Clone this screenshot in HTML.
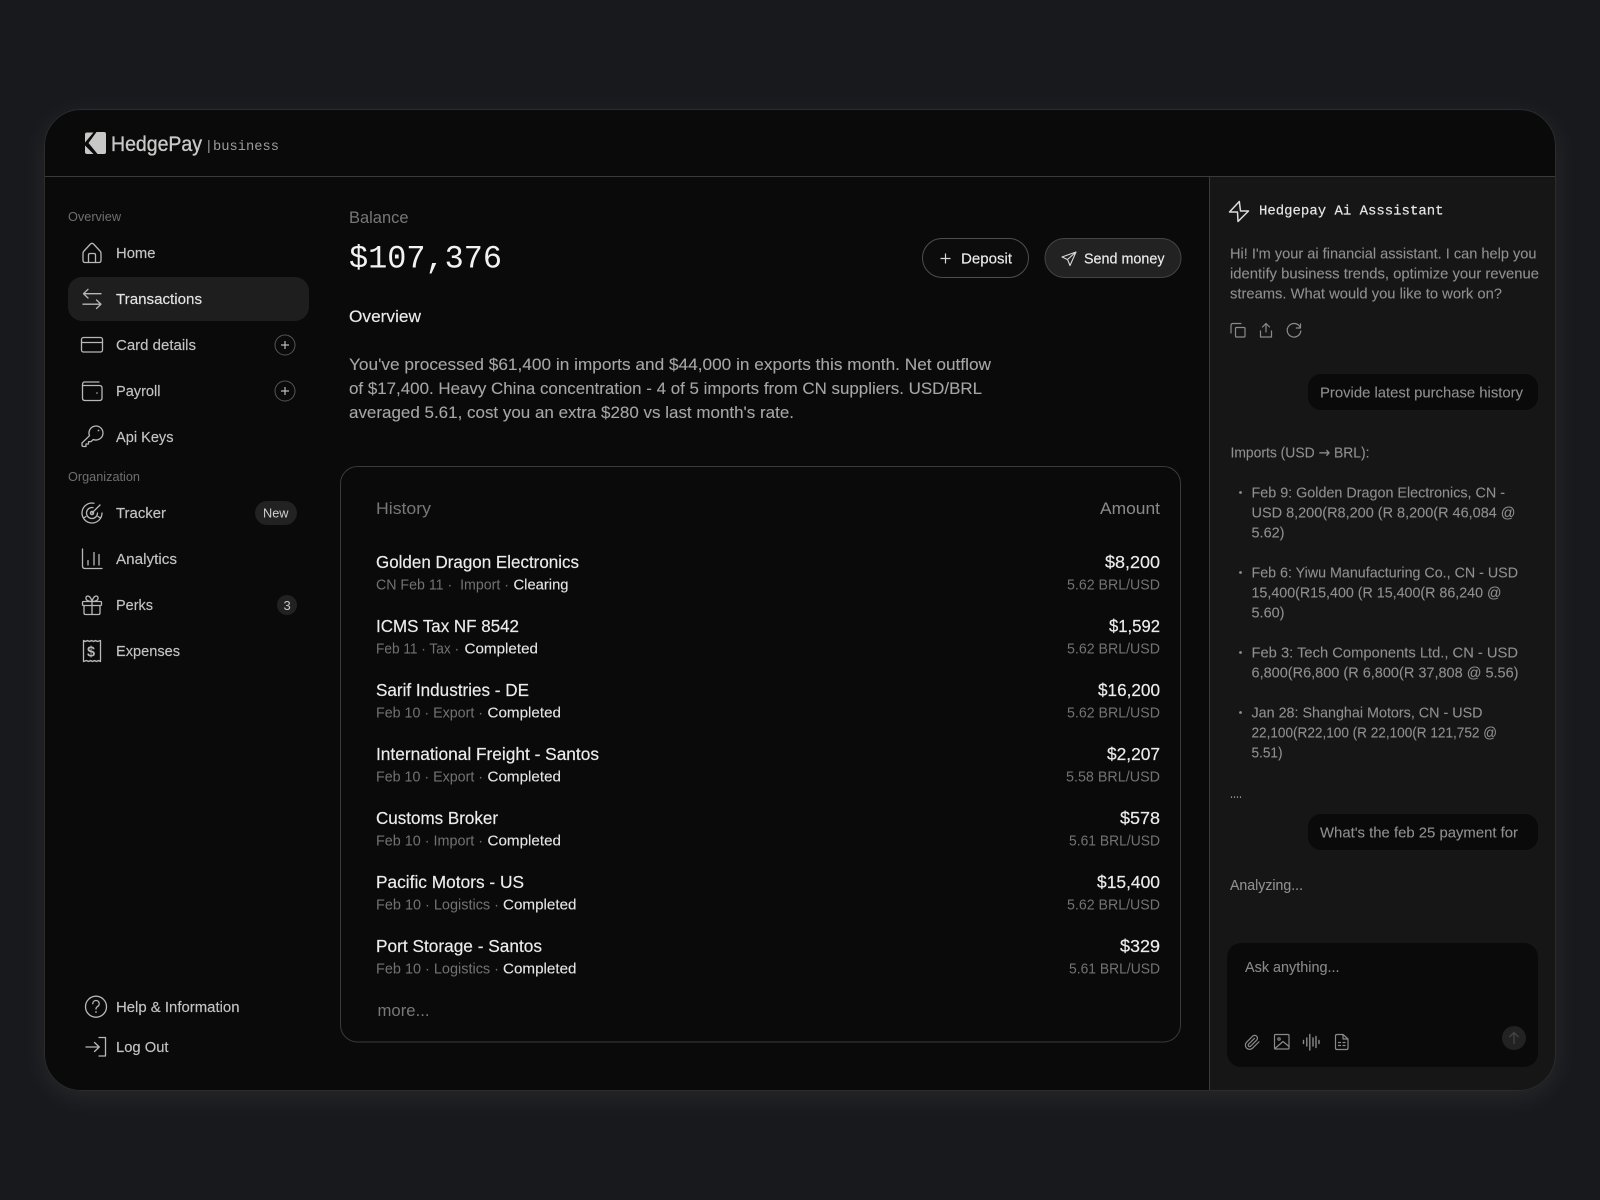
<!DOCTYPE html>
<html><head><meta charset="utf-8"><title>HedgePay</title>
<style>
html,body{margin:0;padding:0;width:1600px;height:1200px;background:#17191c;overflow:hidden}
#glow{position:absolute;left:44px;top:109px;width:1512px;height:982px;border-radius:37px;box-shadow:0 6px 28px rgba(255,255,255,.07)}
svg{position:absolute;left:0;top:0}
text{font-family:"Liberation Sans",sans-serif;white-space:pre}
.m{font-family:"Liberation Mono",monospace}
.nav{font-size:15px;fill:#c4c4c4;stroke:#c4c4c4;stroke-width:.15}
.lab{font-size:12.5px;fill:#6f6f6f}
.nm{font-size:17.5px;fill:#ececec;stroke:#ececec;stroke-width:.18}
.sb{font-size:15px;fill:#727272}
.st{font-size:15px;fill:#e6e6e6;stroke:#e6e6e6;stroke-width:.12}
.amt{font-size:17.5px;fill:#ececec;text-anchor:end;stroke:#ececec;stroke-width:.18}
.rt{font-size:15px;fill:#727272;text-anchor:end}
.ch{font-size:15px;fill:#8f8f8f;stroke:#8f8f8f;stroke-width:.1}
.i{fill:none;stroke:#b8b8b8;stroke-width:1.3;stroke-linecap:round;stroke-linejoin:round}
.j{fill:none;stroke:#8a8a8a;stroke-width:1.2;stroke-linecap:round;stroke-linejoin:round}
</style></head><body>
<div id="glow"></div>
<svg width="1600" height="1200" viewBox="0 0 1600 1200" xmlns="http://www.w3.org/2000/svg">
<rect x="44" y="109" width="1512" height="982" rx="37" fill="#0a0a0a"/>
<path d="M1209.500 176H1555.500V1054A36.500 36.500 0 0 1 1519 1090.500H1209.500Z" fill="#161616"/>
<path d="M44 176.500H1556" stroke="#3a3a38" stroke-width="1"/>
<path d="M1209.500 176V1090" stroke="#3a3a3a" stroke-width="1"/>
<rect x="44.500" y="109.500" width="1511" height="981" rx="36.500" fill="none" stroke="#2c2c2c"/>

<!-- logo -->
<path d="M85 134.500Q85 132.500 87 132.500H93.500L85 142.500Z" fill="#c8c8c6"/>
<path d="M85 145.500L93.500 154H87Q85 154 85 152Z" fill="#c8c8c6"/>
<path d="M96.500 132H104Q106 132 106 134V152Q106 154 104 154H97.500L88.500 143Z" fill="#c8c8c6"/>
<text x="111" y="151" font-size="21" fill="#c9c9c7" stroke="#c9c9c7" stroke-width=".35" textLength="91" lengthAdjust="spacingAndGlyphs">HedgePay</text>
<text x="207" y="150" font-size="14" fill="#9a9a9a">|</text>
<text class="m" x="213" y="150" font-size="13.750" fill="#9c9c9c" textLength="66" lengthAdjust="spacingAndGlyphs">business</text>

<!-- sidebar -->
<text class="lab" x="68" y="221" textLength="53" lengthAdjust="spacingAndGlyphs">Overview</text>
<path class="i" d="M83 253.500Q83 252 84 251L90.500 244Q92 242.600 93.500 244L100 251Q101 252 101 253.500V260Q101 262.500 99 262.500H85Q83 262.500 83 260ZM88.500 262.500V255Q88.500 253.500 90 253.500H94Q95.500 253.500 95.500 255V262.500"/>
<text class="nav" x="116" y="258" textLength="39.500" lengthAdjust="spacingAndGlyphs">Home</text>
<rect x="68" y="277" width="241" height="44" rx="14" fill="#1e1e1e"/>
<path class="i" d="M101 293.700H83.500M83.500 293.700L88 289.300M83.500 293.700L88 298M83 304.200H101M101 304.200L96.500 300M101 304.200L96.500 308.500"/>
<text class="nav" x="116" y="304" textLength="86" lengthAdjust="spacingAndGlyphs" style="fill:#e4e4e4;stroke:#e4e4e4">Transactions</text>
<rect class="i" x="81.500" y="337.500" width="21" height="14.500" rx="2"/><path class="i" d="M81.500 342.500H102.500"/>
<text class="nav" x="116" y="350" textLength="80" lengthAdjust="spacingAndGlyphs">Card details</text>
<circle cx="285" cy="345" r="10" fill="none" stroke="#555"/><path d="M281 345H289M285 341V349" stroke="#bbb" stroke-width="1.200"/>
<path class="i" d="M84 382H99M84 382Q82.500 382.500 82.500 385V398Q82.500 400.500 85 400.500H99.500Q102 400.500 102 398V388Q102 385.500 99.500 385.500H83"/><circle cx="97" cy="393" r=".8" fill="#b8b8b8"/>
<text class="nav" x="116" y="396" textLength="44.500" lengthAdjust="spacingAndGlyphs">Payroll</text>
<circle cx="285" cy="391" r="10" fill="none" stroke="#555"/><path d="M281 391H289M285 387V395" stroke="#bbb" stroke-width="1.200"/>
<path class="i" d="M89.500 435.700A7 7 0 1 1 93.300 439.500L91 441.600H88.500V444H86V446.500H83.500Q82 446.500 82 445V443Z"/><circle cx="98.500" cy="430.500" r=".9" fill="#b8b8b8"/>
<text class="nav" x="116" y="442" textLength="57.500" lengthAdjust="spacingAndGlyphs">Api Keys</text>
<text class="lab" x="68" y="481" textLength="72" lengthAdjust="spacingAndGlyphs">Organization</text>
<path class="i" d="M94 503.200A10 10 0 1 0 102 513M93 507.600A5.500 5.500 0 1 0 97.500 513M92 513L100 505M83.500 518L86 516.500M100.500 518L98 516.500"/><circle cx="92" cy="513" r="1.600" class="i"/>
<text class="nav" x="116" y="518" textLength="50" lengthAdjust="spacingAndGlyphs">Tracker</text>
<rect x="255" y="501" width="42" height="24" rx="12" fill="#222"/><text x="263" y="517.500" font-size="13" fill="#d0d0d0" textLength="25.500" lengthAdjust="spacingAndGlyphs">New</text>
<path class="i" d="M82.500 549V566Q82.500 568.500 85 568.500H102M88 560.500V565M94 552.500V565M99 554.500V565"/>
<text class="nav" x="116" y="564" textLength="61" lengthAdjust="spacingAndGlyphs">Analytics</text>
<path class="i" d="M83.500 601.500H100.500Q101.500 601.500 101.500 602.500V604.500Q101.500 605.500 100.500 605.500H83.500Q82.500 605.500 82.500 604.500V602.500Q82.500 601.500 83.500 601.500ZM84 605.500V613Q84 614.500 85.500 614.500H98.500Q100 614.500 100 613V605.500M92 601.500V614.500M92 601.500C88 601.500 85.500 600 86 597.500C86.800 594.800 90.500 595.500 92 601.500ZM92 601.500C96 601.500 98.500 600 98 597.500C97.200 594.800 93.500 595.500 92 601.500Z"/>
<text class="nav" x="116" y="610" textLength="37" lengthAdjust="spacingAndGlyphs">Perks</text>
<circle cx="287" cy="605" r="10" fill="#222"/><text x="283.500" y="610" font-size="13" fill="#c8c8c8">3</text>
<path class="i" d="M83.500 640.500L85.500 641.500 87.500 640.500 89.500 641.500 91.500 640.500 93.500 641.500 95.500 640.500 97.500 641.500 100.500 640.500V661.500L98.500 660.500 96.500 661.500 94.500 660.500 92.500 661.500 90.500 660.500 88.500 661.500 86.500 660.500 83.500 661.500Z"/>
<text x="87" y="656.500" font-size="14.500" font-weight="bold" fill="#b8b8b8">$</text>
<text class="nav" x="116" y="656" textLength="64" lengthAdjust="spacingAndGlyphs">Expenses</text>
<circle class="i" cx="96" cy="1006.700" r="10.500"/><path class="i" d="M92.800 1003.700A3.200 3.200 0 1 1 97.500 1006.500C96.500 1007.200 96 1007.800 96 1009"/><circle cx="96" cy="1012" r=".9" fill="#b8b8b8"/>
<text class="nav" x="116" y="1012" textLength="123.500" lengthAdjust="spacingAndGlyphs">Help &amp; Information</text>
<path class="i" d="M86 1047H99.300M99.300 1047L94.500 1042.500M99.300 1047L94.500 1051.500M99 1037.500H105.500V1056H99"/>
<text class="nav" x="116" y="1052" textLength="52.500" lengthAdjust="spacingAndGlyphs">Log Out</text>

<!-- main head -->
<text x="349" y="223" font-size="16.500" fill="#777" textLength="59.500" lengthAdjust="spacingAndGlyphs">Balance</text>
<text class="m" x="349" y="267.500" font-size="32" fill="#f2f2f2" textLength="153" lengthAdjust="spacingAndGlyphs">$107,376</text>
<text x="349" y="322" font-size="17" fill="#ececec" stroke="#ececec" stroke-width=".15" textLength="72" lengthAdjust="spacingAndGlyphs">Overview</text>
<text x="349" y="370" font-size="17" fill="#a6a6a6" stroke="#a6a6a6" stroke-width=".1" textLength="642" lengthAdjust="spacingAndGlyphs">You've processed $61,400 in imports and $44,000 in exports this month. Net outflow</text>
<text x="349" y="394" font-size="17" fill="#a6a6a6" stroke="#a6a6a6" stroke-width=".1" textLength="633" lengthAdjust="spacingAndGlyphs">of $17,400. Heavy China concentration - 4 of 5 imports from CN suppliers. USD/BRL</text>
<text x="349" y="418" font-size="17" fill="#a6a6a6" stroke="#a6a6a6" stroke-width=".1" textLength="445" lengthAdjust="spacingAndGlyphs">averaged 5.61, cost you an extra $280 vs last month's rate.</text>

<rect x="922.500" y="238.500" width="106" height="39" rx="19.500" fill="#0c0c0c" stroke="#4e4e4e"/>
<path d="M940.500 258.500H950.500M945.500 253.500V263.500" stroke="#d8d8d8" stroke-width="1.200"/>
<text x="961" y="263.500" font-size="15" fill="#ececec" stroke="#ececec" stroke-width=".15" textLength="51" lengthAdjust="spacingAndGlyphs">Deposit</text>
<rect x="1045" y="238.500" width="136" height="39" rx="19.500" fill="#222" stroke="#444"/>
<path d="M1076 252L1062 257 1067.500 259.500 1070 265.500ZM1076 252L1067.500 259.500" fill="none" stroke="#d8d8d8" stroke-width="1.100" stroke-linejoin="round"/>
<text x="1084" y="263.500" font-size="15" fill="#ececec" stroke="#ececec" stroke-width=".15" textLength="80.500" lengthAdjust="spacingAndGlyphs">Send money</text>

<!-- history -->
<rect x="340.500" y="466.500" width="840" height="575.500" rx="17" fill="#0a0a0a" stroke="#3a3a3a"/>
<text x="376" y="514" font-size="17" fill="#777" textLength="55" lengthAdjust="spacingAndGlyphs">History</text>
<text x="1160" y="514" font-size="17" fill="#8a8a8a" text-anchor="end" textLength="60" lengthAdjust="spacingAndGlyphs">Amount</text>

<text class="nm" x="376" y="568" textLength="203" lengthAdjust="spacingAndGlyphs">Golden Dragon Electronics</text>
<text class="sb" x="376" y="589.500" textLength="133" lengthAdjust="spacingAndGlyphs">CN Feb 11 ·  Import ·</text>
<text class="st" x="513.500" y="589.500" textLength="55" lengthAdjust="spacingAndGlyphs">Clearing</text>
<text class="amt" x="1160" y="568" textLength="55" lengthAdjust="spacingAndGlyphs">$8,200</text>
<text class="rt" x="1160" y="589.500" textLength="93" lengthAdjust="spacingAndGlyphs">5.62 BRL/USD</text>

<text class="nm" x="376" y="632" textLength="143" lengthAdjust="spacingAndGlyphs">ICMS Tax NF 8542</text>
<text class="sb" x="376" y="653.500" textLength="83" lengthAdjust="spacingAndGlyphs">Feb 11 · Tax ·</text>
<text class="st" x="464.500" y="653.500" textLength="73.500" lengthAdjust="spacingAndGlyphs">Completed</text>
<text class="amt" x="1160" y="632" textLength="51" lengthAdjust="spacingAndGlyphs">$1,592</text>
<text class="rt" x="1160" y="653.500" textLength="93" lengthAdjust="spacingAndGlyphs">5.62 BRL/USD</text>

<text class="nm" x="376" y="696" textLength="153" lengthAdjust="spacingAndGlyphs">Sarif Industries - DE</text>
<text class="sb" x="376" y="717.500" textLength="107" lengthAdjust="spacingAndGlyphs">Feb 10 · Export ·</text>
<text class="st" x="487.500" y="717.500" textLength="73.500" lengthAdjust="spacingAndGlyphs">Completed</text>
<text class="amt" x="1160" y="696" textLength="62" lengthAdjust="spacingAndGlyphs">$16,200</text>
<text class="rt" x="1160" y="717.500" textLength="93" lengthAdjust="spacingAndGlyphs">5.62 BRL/USD</text>

<text class="nm" x="376" y="760" textLength="223" lengthAdjust="spacingAndGlyphs">International Freight - Santos</text>
<text class="sb" x="376" y="781.500" textLength="107" lengthAdjust="spacingAndGlyphs">Feb 10 · Export ·</text>
<text class="st" x="487.500" y="781.500" textLength="73.500" lengthAdjust="spacingAndGlyphs">Completed</text>
<text class="amt" x="1160" y="760" textLength="53" lengthAdjust="spacingAndGlyphs">$2,207</text>
<text class="rt" x="1160" y="781.500" textLength="94" lengthAdjust="spacingAndGlyphs">5.58 BRL/USD</text>

<text class="nm" x="376" y="824" textLength="122" lengthAdjust="spacingAndGlyphs">Customs Broker</text>
<text class="sb" x="376" y="845.500" textLength="107" lengthAdjust="spacingAndGlyphs">Feb 10 · Import ·</text>
<text class="st" x="487.500" y="845.500" textLength="73.500" lengthAdjust="spacingAndGlyphs">Completed</text>
<text class="amt" x="1160" y="824" textLength="40" lengthAdjust="spacingAndGlyphs">$578</text>
<text class="rt" x="1160" y="845.500" textLength="91" lengthAdjust="spacingAndGlyphs">5.61 BRL/USD</text>

<text class="nm" x="376" y="888" textLength="148" lengthAdjust="spacingAndGlyphs">Pacific Motors - US</text>
<text class="sb" x="376" y="909.500" textLength="123" lengthAdjust="spacingAndGlyphs">Feb 10 · Logistics ·</text>
<text class="st" x="503" y="909.500" textLength="73.500" lengthAdjust="spacingAndGlyphs">Completed</text>
<text class="amt" x="1160" y="888" textLength="63" lengthAdjust="spacingAndGlyphs">$15,400</text>
<text class="rt" x="1160" y="909.500" textLength="93" lengthAdjust="spacingAndGlyphs">5.62 BRL/USD</text>

<text class="nm" x="376" y="952" textLength="166" lengthAdjust="spacingAndGlyphs">Port Storage - Santos</text>
<text class="sb" x="376" y="973.500" textLength="123" lengthAdjust="spacingAndGlyphs">Feb 10 · Logistics ·</text>
<text class="st" x="503" y="973.500" textLength="73.500" lengthAdjust="spacingAndGlyphs">Completed</text>
<text class="amt" x="1160" y="952" textLength="40" lengthAdjust="spacingAndGlyphs">$329</text>
<text class="rt" x="1160" y="973.500" textLength="91" lengthAdjust="spacingAndGlyphs">5.61 BRL/USD</text>

<text x="377.500" y="1016" font-size="17" fill="#777" textLength="52" lengthAdjust="spacingAndGlyphs">more...</text>

<!-- assistant -->
<path d="M1239.300 201.500L1229.500 212H1237.500L1238 221.500L1248.500 211H1240.500Z" fill="none" stroke="#dcdcdc" stroke-width="1.500" stroke-linejoin="round"/>
<text class="m" x="1259" y="214.500" font-size="14" fill="#e6e6e6" stroke="#e6e6e6" stroke-width=".2" textLength="184.500" lengthAdjust="spacingAndGlyphs">Hedgepay Ai Asssistant</text>
<text class="ch" x="1230" y="258.500" textLength="306.500" lengthAdjust="spacingAndGlyphs">Hi! I'm your ai financial assistant. I can help you</text>
<text class="ch" x="1230" y="278.500" textLength="309" lengthAdjust="spacingAndGlyphs">identify business trends, optimize your revenue</text>
<text class="ch" x="1230" y="298.500" textLength="272" lengthAdjust="spacingAndGlyphs">streams. What would you like to work on?</text>
<rect class="j" x="1235.500" y="327.500" width="9.500" height="9.500" rx="1"/><path class="j" d="M1241 323.500H1233Q1231 323.500 1231 325.500V333"/>
<path class="j" d="M1266 332V323.500M1262.500 327L1266 323.500 1269.500 327M1260.500 331V337H1271.500V331"/>
<path class="j" d="M1300 327A6.800 6.800 0 1 0 1300.800 331M1300.500 323.800V328H1296.300"/>
<rect x="1308" y="374" width="230" height="36" rx="13" fill="#0a0a0a"/>
<text class="ch" x="1320" y="397.500" textLength="203" lengthAdjust="spacingAndGlyphs">Provide latest purchase history</text>
<text class="ch" x="1230.500" y="457.500" textLength="139" lengthAdjust="spacingAndGlyphs">Imports (USD <tspan style="font-family:'DejaVu Sans',sans-serif">→</tspan> BRL):</text>
<g fill="#8f8f8f"><circle cx="1240.500" cy="492.500" r="1.400"/><circle cx="1240.500" cy="572.500" r="1.400"/><circle cx="1240.500" cy="652.500" r="1.400"/><circle cx="1240.500" cy="712.500" r="1.400"/></g>
<text class="ch" x="1251.500" y="497.500" textLength="253.500" lengthAdjust="spacingAndGlyphs">Feb 9: Golden Dragon Electronics, CN -</text>
<text class="ch" x="1251.500" y="517.500" textLength="264" lengthAdjust="spacingAndGlyphs">USD 8,200(R8,200 (R 8,200(R 46,084 @</text>
<text class="ch" x="1251.500" y="537.500" textLength="33" lengthAdjust="spacingAndGlyphs">5.62)</text>
<text class="ch" x="1251.500" y="577.500" textLength="266.500" lengthAdjust="spacingAndGlyphs">Feb 6: Yiwu Manufacturing Co., CN - USD</text>
<text class="ch" x="1251.500" y="597.500" textLength="250" lengthAdjust="spacingAndGlyphs">15,400(R15,400 (R 15,400(R 86,240 @</text>
<text class="ch" x="1251.500" y="617.500" textLength="33" lengthAdjust="spacingAndGlyphs">5.60)</text>
<text class="ch" x="1251.500" y="657.500" textLength="266.500" lengthAdjust="spacingAndGlyphs">Feb 3: Tech Components Ltd., CN - USD</text>
<text class="ch" x="1251.500" y="677.500" textLength="267" lengthAdjust="spacingAndGlyphs">6,800(R6,800 (R 6,800(R 37,808 @ 5.56)</text>
<text class="ch" x="1251.500" y="717.500" textLength="231" lengthAdjust="spacingAndGlyphs">Jan 28: Shanghai Motors, CN - USD</text>
<text class="ch" x="1251.500" y="737.500" textLength="245.500" lengthAdjust="spacingAndGlyphs">22,100(R22,100 (R 22,100(R 121,752 @</text>
<text class="ch" x="1251.500" y="757.500" textLength="31" lengthAdjust="spacingAndGlyphs">5.51)</text>
<text class="ch" x="1230" y="798" textLength="12" lengthAdjust="spacingAndGlyphs">....</text>
<rect x="1308" y="814" width="230" height="36" rx="13" fill="#0a0a0a"/>
<text class="ch" x="1320" y="837.500" textLength="198" lengthAdjust="spacingAndGlyphs">What's the feb 25 payment for</text>
<text class="ch" x="1230" y="890" textLength="73" lengthAdjust="spacingAndGlyphs">Analyzing...</text>

<rect x="1227" y="943" width="311" height="124" rx="14" fill="#0a0a0a"/>
<text class="ch" x="1245" y="972" textLength="94.500" lengthAdjust="spacingAndGlyphs" style="fill:#888;stroke:#888">Ask anything...</text>
<path d="M21.440 11.050l-9.190 9.190a6 6 0 0 1-8.490-8.490l8.570-8.570A4 4 0 1 1 18 8.840l-8.590 8.570a2 2 0 0 1-2.830-2.830l8.490-8.480" transform="translate(1244 1034) scale(.7)" fill="none" stroke="#8a8a8a" stroke-width="1.700" stroke-linecap="round" stroke-linejoin="round"/>
<rect class="j" x="1274.500" y="1034.500" width="14.500" height="14.500" rx="1"/><circle class="j" cx="1279" cy="1039" r="1.200"/><path class="j" d="M1275 1048.500L1283 1041.500 1289 1046.500"/>
<path class="j" d="M1303.500 1040.500V1043.500M1306.800 1038V1046M1309.800 1034.500V1050M1313 1038V1046M1316 1036.500V1047.500M1319 1040.500V1043.500" style="stroke-width:1.400"/>
<path class="j" d="M1335.500 1036Q1335.500 1034.500 1337 1034.500H1343L1348 1039V1048Q1348 1049.500 1346.500 1049.500H1337Q1335.500 1049.500 1335.500 1048ZM1343 1034.500V1039H1348M1338.500 1042.500H1340.500M1343 1042.500H1345M1338.500 1045.500H1340.500M1343 1045.500H1345"/>
<circle cx="1514" cy="1038" r="12" fill="#222"/>
<path d="M1514 1044V1032.500M1509.500 1037L1514 1032.500 1518.500 1037" fill="none" stroke="#454548" stroke-width="1.300"/>
</svg>
</body></html>
